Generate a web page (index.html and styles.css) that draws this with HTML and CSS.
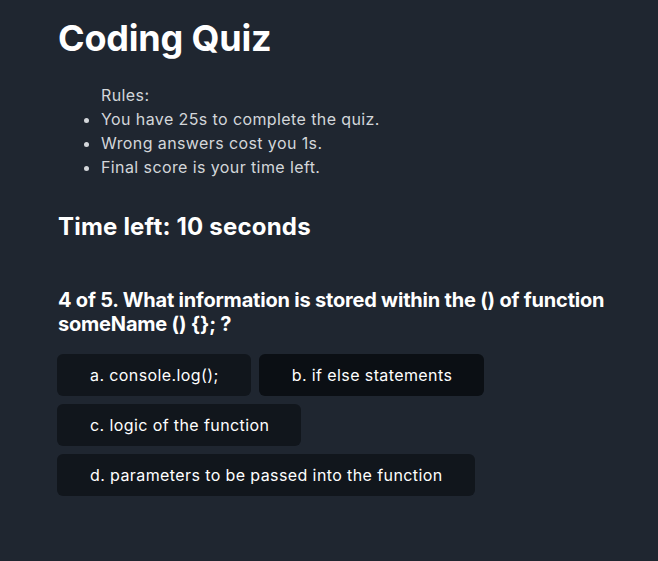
FILE: index.html
```html
<!DOCTYPE html>
<html lang="en">
<head>
<meta charset="utf-8">
<title>Coding Quiz</title>
<link rel="stylesheet" href="styles.css">
</head>
<body>
<main class="page">
  <h1 class="title">Coding Quiz</h1>
  <ul class="rules">
    <li class="rules-head">Rules:</li>
    <li>You have 25s to complete the quiz.</li>
    <li>Wrong answers cost you 1s.</li>
    <li>Final score is your time left.</li>
  </ul>
  <h2 class="timer">Time left: 10 seconds</h2>
  <h3 class="question">4 of 5. What information is stored within the () of function someName () {}; ?</h3>
  <div class="answers">
    <button class="answer">a. console.log();</button>
    <button class="answer answer-hover">b. if else statements</button>
    <button class="answer">c. logic of the function</button>
    <button class="answer">d. parameters to be passed into the function</button>
  </div>
</main>
</body>
</html>
```

FILE: styles.css
```css
html, body {
  margin: 0;
  padding: 0;
  background: #1f2630;
  height: 100%;
}
body {
  font-family: Inter, "Noto Sans", sans-serif;
  color: #ffffff;
}
.page {
  padding: 14px 0 0 58px;
  width: 560px;
}
.title {
  font-size: 36px;
  font-weight: 700;
  margin: 0 0 21px 0;
  line-height: 48px;
  letter-spacing: -0.2px;
}
.rules {
  margin: 0;
  padding-left: 43px;
  font-size: 16px;
  line-height: 24px;
  letter-spacing: 0.4px;
  color: #d3d6da;
}
.rules-head {
  list-style: none;
}
.timer {
  font-size: 24px;
  font-weight: 700;
  margin: 32px 0 0 0;
  line-height: 32px;
  letter-spacing: 0.2px;
}
.question {
  font-size: 20px;
  font-weight: 700;
  margin: 45px 0 0 0;
  line-height: 24px;
  letter-spacing: -0.2px;
}
.answers {
  display: flex;
  flex-wrap: wrap;
  gap: 8px;
  margin: 18px 0 0 -1px;
  width: 440px;
}
.answer {
  font-family: Inter, "Noto Sans", sans-serif;
  font-size: 16px;
  letter-spacing: 0.4px;
  color: #ffffff;
  background: #11161c;
  border: none;
  border-radius: 6px;
  padding: 0 32px 0 33px;
  height: 42px;
  cursor: pointer;
}
.answer-hover {
  background: #0b0f14;
}
```
